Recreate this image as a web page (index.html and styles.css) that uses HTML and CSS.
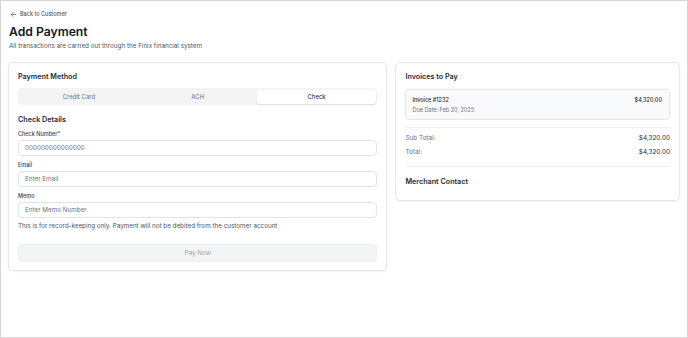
FILE: index.html
```html
<!DOCTYPE html>
<html lang="en">
<head>
    <meta charset="UTF-8">
    <meta name="viewport" content="width=device-width, initial-scale=1.0">
    <title>Add Payment</title>
    <link rel="stylesheet" href="styles.css">
</head>
<body>
    <div class="page">
        <a class="back-link" href="#">
            <svg width="7" height="7" viewBox="0 0 24 24" fill="none" stroke="currentColor" stroke-width="2.4" stroke-linecap="round" stroke-linejoin="round"><path d="M11 5l-7 7 7 7M4 12h16"/></svg>
            Back to Customer
        </a>
        <h1>Add Payment</h1>
        <p class="subtitle">All transactions are carried out through the Finix financial system</p>

        <div class="columns">
            <div class="card">
                <h2>Payment Method</h2>
                <div class="tabs">
                    <div class="tab">Credit Card</div>
                    <div class="tab">ACH</div>
                    <div class="tab active">Check</div>
                </div>

                <h3>Check Details</h3>
                <label>Check Number*</label>
                <div class="input">000000000000000</div>
                <label>Email</label>
                <div class="input">Enter Email</div>
                <label>Memo</label>
                <div class="input">Enter Memo Number</div>
                <p class="note">This is for record-keeping only. Payment will not be debited from the customer account</p>

                <button class="pay-btn">Pay Now</button>
            </div>

            <div class="card side">
                <h2>Invoices to Pay</h2>
                <div class="invoice">
                    <div class="invoice-row">
                        <span class="invoice-name">Invoice #1232</span>
                        <span class="invoice-amount">$4,320.00</span>
                    </div>
                    <div class="invoice-due">Due Date: Feb 20, 2025</div>
                </div>
                <div class="totals">
                    <div class="total-row"><span>Sub Total:</span><b>$4,320.00</b></div>
                    <div class="total-row"><span>Total:</span><b>$4,320.00</b></div>
                </div>
                <h2 class="merchant">Merchant Contact</h2>
            </div>
        </div>
    </div>
</body>
</html>
```

FILE: styles.css
```css
* {
    box-sizing: border-box;
}
body {
    margin: 0;
    font-family: Inter, "Noto Sans", sans-serif;
    color: #111827;
    background: #fff;
}
.page {
    height: 338px;
    border: 1px solid #d6d6d6;
    padding: 8px 7px 0 7px;
}
.back-link {
    display: flex;
    align-items: center;
    gap: 3px;
    margin-left: 2px;
    height: 10px;
    font-size: 5.5px;
    font-weight: 500;
    color: #4b5563;
    text-decoration: none;
}
h1 {
    margin: 5px 0 0 1px;
    font-size: 12.2px;
    line-height: 16px;
    font-weight: 600;
    color: #111827;
}
.subtitle {
    margin: 1px 0 0 1px;
    font-size: 6.3px;
    line-height: 10px;
    color: #4b5563;
}
.columns {
    display: grid;
    grid-template-columns: 4fr 3fr;
    gap: 8px;
    margin-top: 11px;
    align-items: start;
}
.card {
    border: 1px solid #e5e7eb;
    border-radius: 5px;
    padding: 9px 9px 8px 9px;
    box-shadow: 0 1px 2px rgba(0, 0, 0, 0.06);
    display: flex;
    flex-direction: column;
}
h2 {
    margin: 0;
    font-size: 7.2px;
    line-height: 10px;
    font-weight: 600;
    color: #1f2937;
}
h3 {
    margin: 10px 0 0 0;
    font-size: 7.2px;
    line-height: 10px;
    font-weight: 600;
    color: #1f2937;
}
.tabs {
    display: flex;
    margin-top: 6px;
    height: 17px;
    padding: 1.5px;
    background: #f3f4f6;
    border-radius: 4px;
}
.tab {
    flex: 1;
    display: flex;
    align-items: center;
    justify-content: center;
    font-size: 6px;
    color: #6b7280;
    border-radius: 3px;
}
.tab.active {
    background: #fff;
    color: #111827;
    box-shadow: 0 1px 2px rgba(0, 0, 0, 0.1);
}
label {
    display: block;
    margin-top: 5px;
    font-size: 5.5px;
    line-height: 8px;
    font-weight: 500;
    color: #374151;
}
.input {
    margin-top: 2px;
    height: 16px;
    border: 1px solid #e2e2ec;
    border-radius: 4px;
    padding: 0 6px;
    display: flex;
    align-items: center;
    font-size: 6.3px;
    color: #6b7280;
}
.note {
    margin: 3px 0 0 0;
    font-size: 6.3px;
    line-height: 10px;
    color: #4b5563;
}
.pay-btn {
    margin-top: 13px;
    height: 18px;
    border: 1px solid #eef0f3;
    border-radius: 4px;
    background: #f3f4f6;
    font-family: inherit;
    font-size: 6.3px;
    color: #9ca3af;
}
.invoice {
    margin-top: 7px;
    height: 31px;
    padding: 6px 7px 0 6px;
    background: #f9fafb;
    border: 1px solid #e5e7eb;
    border-radius: 4px;
}
.invoice-row {
    display: flex;
    justify-content: space-between;
    font-size: 5.5px;
    line-height: 9px;
    font-weight: 500;
    color: #1f2937;
}
.invoice-due {
    font-size: 5.5px;
    line-height: 10px;
    color: #6b7280;
}
.totals {
    margin-top: 7px;
    padding: 5px 0 9px 0;
    border-top: 1px solid #f0f1f3;
    border-bottom: 1px solid #f0f1f3;
    display: flex;
    flex-direction: column;
    gap: 4px;
}
.total-row {
    display: flex;
    justify-content: space-between;
    font-size: 6.4px;
    line-height: 10px;
    color: #6b7280;
}
.total-row b {
    font-weight: 400;
    color: #1f2937;
}
.merchant {
    margin-top: 10px;
    margin-bottom: 5px;
}
```
